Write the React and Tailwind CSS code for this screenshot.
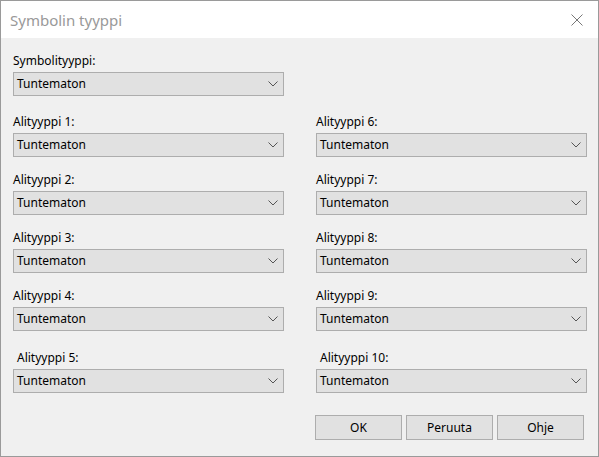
import React from 'react';

const Chevron = () => (
  <svg width="10" height="6" viewBox="0 0 10 6" className="shrink-0">
    <path d="M0.5 0.5 L5 5 L9.5 0.5" fill="none" stroke="#555" strokeWidth="1" />
  </svg>
);

const Select = ({ value }) => (
  <div className="h-[24px] w-[271px] border border-[#adadad] bg-[#e1e1e1] flex items-center pl-[3px] pr-[5px] justify-between">
    <span className="text-black">{value}</span>
    <Chevron />
  </div>
);

const Field = ({ label, indent, className = '' }) => (
  <div className={className}>
    <div className={`h-[16px] leading-[16px] mb-[3px] ${indent ? 'pl-[4px]' : ''}`}>{label}</div>
    <Select value="Tuntematon" />
  </div>
);

const Button = ({ children }) => (
  <button className="w-[87px] h-[25px] border border-[#adadad] bg-[#e1e1e1] text-black leading-none">
    {children}
  </button>
);

export default function App() {
  const left = ['Alityyppi 1:', 'Alityyppi 2:', 'Alityyppi 3:', 'Alityyppi 4:'];
  const right = ['Alityyppi 6:', 'Alityyppi 7:', 'Alityyppi 8:', 'Alityyppi 9:'];

  return (
    <div
      className="w-[599px] h-[457px] border border-[#9a9a9a] flex flex-col text-[12px] text-black"
      style={{ fontFamily: '"Noto Sans", "Liberation Sans", sans-serif' }}
    >
      {/* Otsikkopalkki */}
      <div className="h-[37px] bg-white flex items-center justify-between pl-[9px] pr-[15px] shrink-0">
        <span className="text-[15px] text-[#999] pt-[1px]">Symbolin tyyppi</span>
        <svg width="12" height="12" viewBox="0 0 12 12">
          <path d="M0.5 0.5 L11.5 11.5 M11.5 0.5 L0.5 11.5" stroke="#777" strokeWidth="1" fill="none" />
        </svg>
      </div>

      {/* Sisältö */}
      <div className="flex-1 bg-[#f0f0f0] pl-[12px] pt-[15px]">
        <Field label="Symbolityyppi:" />

        <div className="mt-[18px] grid grid-cols-[271px_271px] gap-x-[32px] gap-y-[15px]">
          {left.map((l, i) => (
            <React.Fragment key={l}>
              <Field label={l} />
              <Field label={right[i]} />
            </React.Fragment>
          ))}
          <Field label="Alityyppi 5:" indent className="mt-[4px]" />
          <Field label="Alityyppi 10:" indent className="mt-[4px]" />
        </div>

        <div className="mt-[22px] flex justify-end gap-[4px] pr-[14px]">
          <Button>OK</Button>
          <Button>Peruuta</Button>
          <Button>Ohje</Button>
        </div>
      </div>
    </div>
  );
}
